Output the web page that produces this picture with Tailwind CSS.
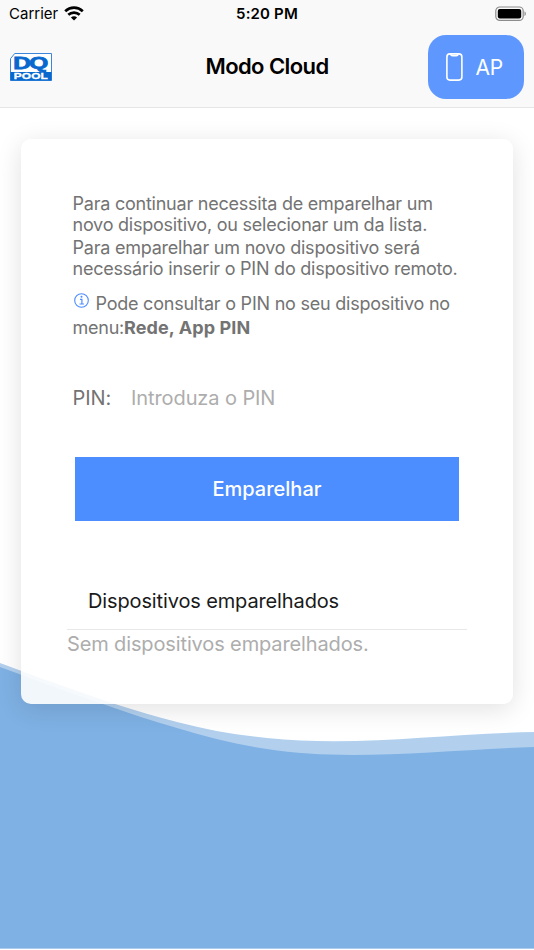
<!DOCTYPE html>
<html lang="pt">
<head>
<meta charset="utf-8">
<title>Modo Cloud</title>
<script src="https://cdn.jsdelivr.net/npm/@tailwindcss/browser@4"></script>
</head>
<body class="bg-white font-['Inter','Liberation_Sans',sans-serif]">
<div class="relative isolate flex h-[950px] w-[534px] flex-col overflow-hidden">
  <svg class="absolute inset-0 -z-10" width="534" height="950" viewBox="0 0 534 950">
    <path fill="#b2d0ee" d="M0 663C40 678 77 691 115 704C137 711 157 717 177 722C207 730 237 735 267 738C357 747 440 734 534 732V948.500H0Z"/>
    <path fill="#7fb1e4" d="M0 667C35 680 68 692 103 704C128 713 152 721 177 728C207 737 237 745 267 749C347 762 440 750 534 747V948.500H0Z"/>
  </svg>
  <header class="flex h-[108px] flex-col border-b border-[#e6e6e6] bg-[#f9f9f9]">
    <div class="grid h-[27px] grid-cols-3 items-center pr-[7px] pl-[9px] text-black">
      <div class="flex items-center gap-[6px] pt-px">
        <span class="text-[15px]">Carrier</span>
        <svg class="mb-px" width="20" height="15" viewBox="0 0 20 15" fill="none" stroke="#000" stroke-width="2.700"><path d="M1.200 5.200C6.300 .5 13.700 .5 18.800 5.200M4.300 8.700C7.500 5.800 12.500 5.800 15.700 8.700"/><path d="M10 14.500L6.900 11.400C8.600 9.800 11.400 9.800 13.100 11.400Z" fill="#000" stroke="none"/></svg>
      </div>
      <span class="pt-[2px] pr-[2px] text-center text-[15px] font-semibold tracking-[0.15px]">5:20 PM</span>
      <svg class="justify-self-end" width="32" height="16" viewBox="0 0 32 16"><rect x=".8" y="1" width="27.400" height="13.400" rx="4" fill="none" stroke="#8c8c8c" stroke-width="1.200"/><rect x="2.800" y="3" width="23.400" height="9.400" rx="2" fill="#000"/><path d="M29.500 5.300C31.300 6 31.300 9.400 29.500 10.100Z" fill="#8c8c8c"/></svg>
    </div>
    <div class="grid h-20 grid-cols-[128px_1fr_128px] items-center px-[10px]">
      <svg width="42" height="28" viewBox="0 0 42 28"><path d="M4.700 .5H41.500V27.500H.5V5.700Z" fill="#fff" stroke="#3b86d8"/><path d="M.5 19H41.500V27.500H.5Z" fill="#0868ce"/><g font-family="Liberation Sans,sans-serif" font-weight="700"><text transform="translate(3.300 15.800) scale(1.480 1)" font-size="16.500" fill="#0868ce" stroke="#0868ce" stroke-width=".8" textLength="23.600" lengthAdjust="spacing">DQ</text><text transform="translate(3.800 26) scale(1.450 1)" font-size="8.200" fill="#fff" stroke="#fff" stroke-width=".3" textLength="23.500" lengthAdjust="spacing">POOL</text></g></svg>
      <h1 class="pb-px text-center text-[22px] font-semibold tracking-[-0.58px]">Modo Cloud</h1>
      <button class="mr-[0.5px] flex h-16 w-24 items-center gap-[13px] justify-self-end rounded-[18px] bg-[#5e98ff] pl-[18px] text-[21px] tracking-[-0.3px] text-white">
        <svg width="17" height="28" viewBox="0 0 17 28" fill="none" stroke="#fff" stroke-width="1.600"><rect x=".9" y=".9" width="15" height="26.200" rx="3"/><path d="M4.600 1C5 2.600 5.500 2.600 6.500 2.600H10.300C11.500 2.600 11.800 2.600 12.200 1"/></svg><span class="pt-[2px]">AP</span>
      </button>
    </div>
  </header>
  <main class="mt-[31px] ml-[21px] flex h-[565px] w-[492px] flex-col rounded-[10px] bg-white/90 px-[46px] pt-[54px] shadow-[0_5px_26px_rgba(0,0,0,0.12)]">
    <div class="pl-[5.5px] text-[18px] leading-[21px] tracking-[-0.23px] whitespace-nowrap text-[#737373]">
      <p>Para continuar necessita de emparelhar um<br>novo dispositivo, ou selecionar um da lista.</p>
      <p class="mt-[2px]">Para emparelhar um novo dispositivo será<br>necessário inserir o PIN do dispositivo remoto.</p>
      <p class="mt-[13px] leading-[24px]"><svg class="mr-[6px] inline-block align-[1px]" width="17" height="17" viewBox="0 0 17 17" fill="none" stroke="#4c8dff"><circle cx="8.500" cy="8.500" r="6.800" stroke-width="1.100"/><path d="M7 7.300H8.900V12M6.500 12H11" stroke-width="1.200"/><circle cx="8.500" cy="4.800" r="1" fill="#4c8dff" stroke="none"/></svg>Pode consultar o PIN no seu dispositivo no<br>menu:<b class="tracking-[0.1px]">Rede, App PIN</b></p>
    </div>
    <div class="mt-[43px] flex h-[30px] items-center gap-5 pl-[5.5px] text-[20px] tracking-[-0.1px]"><label for="pin" class="text-[#737373]">PIN:</label><input id="pin" class="w-[300px] outline-none placeholder:text-[#adadad]" placeholder="Introduza o PIN"></div>
    <button class="mt-[43.5px] ml-[8px] h-16 w-96 bg-[#4c8dff] text-[20px] font-medium text-white">Emparelhar</button>
    <section class="mt-[53px] text-[20px] tracking-[-0.13px]">
      <h2 class="h-[56px] border-b border-[#e8e8e8] pl-[21px] leading-[54px] text-[#1a1a1a]">Dispositivos emparelhados</h2>
      <p class="leading-[29px] text-[#adadad]">Sem dispositivos emparelhados.</p>
    </section>
  </main>
</div>
</body>
</html>
